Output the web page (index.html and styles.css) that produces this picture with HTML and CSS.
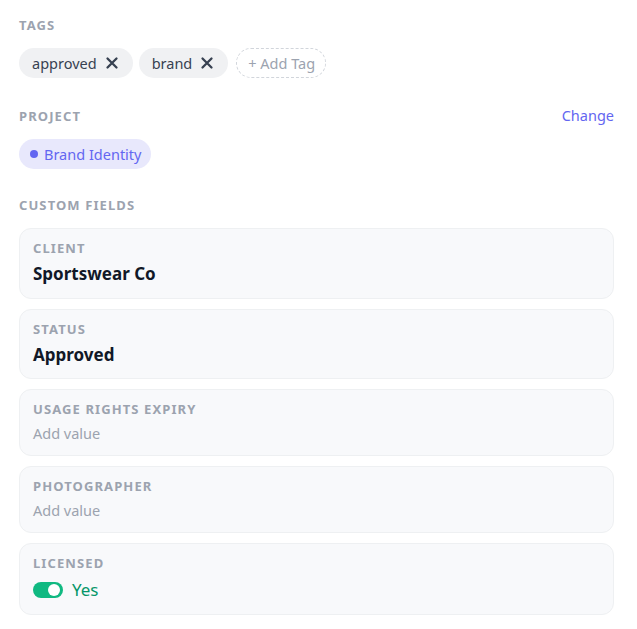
FILE: index.html
```html
<!DOCTYPE html>
<html>
<head>
<meta charset="utf-8">
<link rel="stylesheet" href="styles.css">
</head>
<body>
<div class="panel">
  <section class="section">
    <div class="section-head"><span class="label">TAGS</span></div>
    <div class="tags">
      <span class="tag">approved <svg class="x" viewBox="0 0 16 16"><path d="M3.5 3.5L12.5 12.5M12.5 3.5L3.5 12.5"/></svg></span>
      <span class="tag">brand <svg class="x" viewBox="0 0 16 16"><path d="M3.5 3.5L12.5 12.5M12.5 3.5L3.5 12.5"/></svg></span>
      <span class="tag add">+ Add Tag</span>
    </div>
  </section>
  <section class="section">
    <div class="section-head"><span class="label">PROJECT</span><a class="change">Change</a></div>
    <div class="tags project-row">
      <span class="project"><span class="dot"></span>Brand Identity</span>
    </div>
  </section>
  <section class="section custom">
    <div class="section-head"><span class="label">CUSTOM FIELDS</span></div>
    <div class="fields">
      <div class="field"><div class="label">CLIENT</div><div class="value strong">Sportswear Co</div></div>
      <div class="field"><div class="label">STATUS</div><div class="value strong">Approved</div></div>
      <div class="field"><div class="label">USAGE RIGHTS EXPIRY</div><div class="value empty">Add value</div></div>
      <div class="field"><div class="label">PHOTOGRAPHER</div><div class="value empty">Add value</div></div>
      <div class="field"><div class="label">LICENSED</div><div class="value toggle-row"><span class="toggle"><span class="knob"></span></span><span class="yes">Yes</span></div></div>
    </div>
  </section>
</div>
</body>
</html>
```
FILE: styles.css
```css
* { box-sizing: border-box; }
body {
  margin: 0;
  background: #fff;
  font-family: "Noto Sans", "Open Sans", sans-serif;
  color: #111827;
}
.panel {
  padding: 15px 23px 16px 19px;
  display: flex;
  flex-direction: column;
  gap: 28px;
}
.section.custom { margin-top: -2px; }
.section-head {
  display: flex;
  justify-content: space-between;
  align-items: center;
  height: 20px;
  margin-bottom: 13px;
}
.label {
  font-size: 13px;
  font-weight: 700;
  letter-spacing: 1.1px;
  color: #9ca3af;
  line-height: 16px;
}
.change {
  font-size: 14.5px;
  line-height: 18px;
  margin-bottom: 2px;
  color: #6366f1;
}
.tags {
  display: flex;
  gap: 6px;
  align-items: center;
}
.project-row { margin-top: 1px; }
.tag {
  display: inline-flex;
  align-items: center;
  height: 30px;
  padding: 0 13px 0 13px;
  border-radius: 15px;
  background: #f0f1f3;
  font-size: 14.5px;
  color: #374151;
  gap: 7px;
}
.x {
  width: 16px;
  height: 16px;
  stroke: #374151;
  stroke-width: 2.3;
  stroke-linecap: round;
  fill: none;
}
.tag.add {
  background: transparent;
  border: 1px dashed #d1d5db;
  color: #9ca3af;
  padding: 0 10px 0 11px;
  margin-left: 2px;
}
.project {
  display: inline-flex;
  align-items: center;
  height: 30px;
  padding: 0 10px 0 11px;
  border-radius: 15px;
  background: #e8e8fc;
  color: #6366f1;
  font-size: 14.5px;
  gap: 6px;
}
.dot {
  width: 8px;
  height: 8px;
  border-radius: 50%;
  background: #6366f1;
}
.fields {
  display: flex;
  flex-direction: column;
  gap: 10px;
}
.field {
  background: #f8f9fb;
  border: 1px solid #eef0f2;
  border-radius: 12px;
  padding: 11px 13px 11px;
  display: flex;
  flex-direction: column;
  gap: 6px;
}
.value { line-height: 24.5px; }
.value.strong { font-size: 17px; font-weight: 700; color: #111827; }
.value.empty { font-size: 14.5px; color: #9ca3af; line-height: 21px; }
.toggle-row { display: flex; align-items: center; gap: 9px; line-height: 25.5px; height: 25.5px; }
.toggle {
  width: 30px;
  height: 16px;
  border-radius: 8px;
  background: #10b981;
  display: flex;
  align-items: center;
  justify-content: flex-end;
  padding: 0 3px;
}
.knob { width: 12px; height: 12px; border-radius: 50%; background: #fff; }
.yes { font-size: 17px; color: #059669; }
```
